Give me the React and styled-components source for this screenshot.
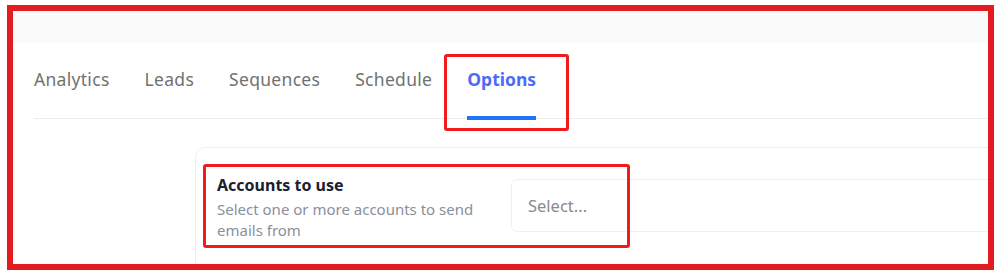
import React from 'react';
import styled, { createGlobalStyle } from 'styled-components';

const GlobalStyle = createGlobalStyle`
	html, body {
		margin: 0;
		padding: 0;
		background: #ffffff;
		font-family: "Noto Sans", Lato, Arial, sans-serif;
	}
`;

const Page = styled.div`
	position: relative;
	width: 1000px;
	height: 279px;
	padding: 5px 0 0 7px;
	box-sizing: border-box;
`;

const Frame = styled.div`
	width: 987px;
	height: 265px;
	box-sizing: border-box;
	border: 6px solid #e31c1f;
	overflow: hidden;
	background: #ffffff;
`;

const TopStrip = styled.div`
	height: 31px;
	background: #fafafa;
`;

const TabBar = styled.nav`
	display: flex;
	gap: 35px;
	height: 76px;
	margin-left: 21px;
	border-bottom: 1px solid #ececec;
`;

const Tab = styled.div`
	position: relative;
	display: flex;
	align-items: center;
	padding-bottom: 2px;
	font-size: 17.5px;
	letter-spacing: ${(p) => (p.$active ? '0' : '0.3px')};
	font-weight: ${(p) => (p.$active ? 700 : 400)};
	color: ${(p) => (p.$active ? '#4a6cf6' : '#717171')};

	&::after {
		content: '';
		display: ${(p) => (p.$active ? 'block' : 'none')};
		position: absolute;
		left: 0;
		right: 0;
		bottom: -2px;
		height: 4px;
		background: #1f74f5;
	}
`;

const Card = styled.div`
	display: flex;
	width: 900px;
	height: 140px;
	margin: 28px 0 0 182px;
	padding: 27px 0 0 21px;
	box-sizing: border-box;
	border: 1px solid #eceef4;
	border-radius: 10px;
`;

const LabelColumn = styled.div`
	width: 294px;
	flex-shrink: 0;
`;

const Title = styled.div`
	font-size: 16px;
	line-height: 20px;
	font-weight: 700;
	color: #1b2030;
`;

const Description = styled.div`
	margin-top: 4px;
	font-size: 15px;
	line-height: 21px;
	color: #8a8f9a;
`;

const SelectBox = styled.div`
	display: flex;
	align-items: center;
	width: 520px;
	height: 53px;
	margin-top: 4px;
	padding-left: 16px;
	box-sizing: border-box;
	border: 1px solid #eef0f4;
	border-radius: 6px;
	font-size: 16.5px;
	color: #8a8a8a;
`;

const Annotation = styled.div`
	position: absolute;
	left: ${(p) => p.$x}px;
	top: ${(p) => p.$y}px;
	width: ${(p) => p.$w}px;
	height: ${(p) => p.$h}px;
	box-sizing: border-box;
	border: 3px solid #f01b1b;
	border-radius: 3px;
	pointer-events: none;
`;

const tabs = ['Analytics', 'Leads', 'Sequences', 'Schedule', 'Options'];

const App = () => {
	return (
		<>
			<GlobalStyle />
			<Page>
				<Frame>
					<TopStrip />

					<TabBar>
						{tabs.map((t) => (
							<Tab key={t} $active={t === 'Options'}>
								{t}
							</Tab>
						))}
					</TabBar>

					<Card>
						<LabelColumn>
							<Title>Accounts to use</Title>
							<Description>
								Select one or more accounts to send emails from
							</Description>
						</LabelColumn>

						<SelectBox>Select...</SelectBox>
					</Card>
				</Frame>

				<Annotation $x={444} $y={54} $w={125} $h={77} />
				<Annotation $x={203} $y={164} $w={427} $h={84} />
			</Page>
		</>
	);
};

export default App;
